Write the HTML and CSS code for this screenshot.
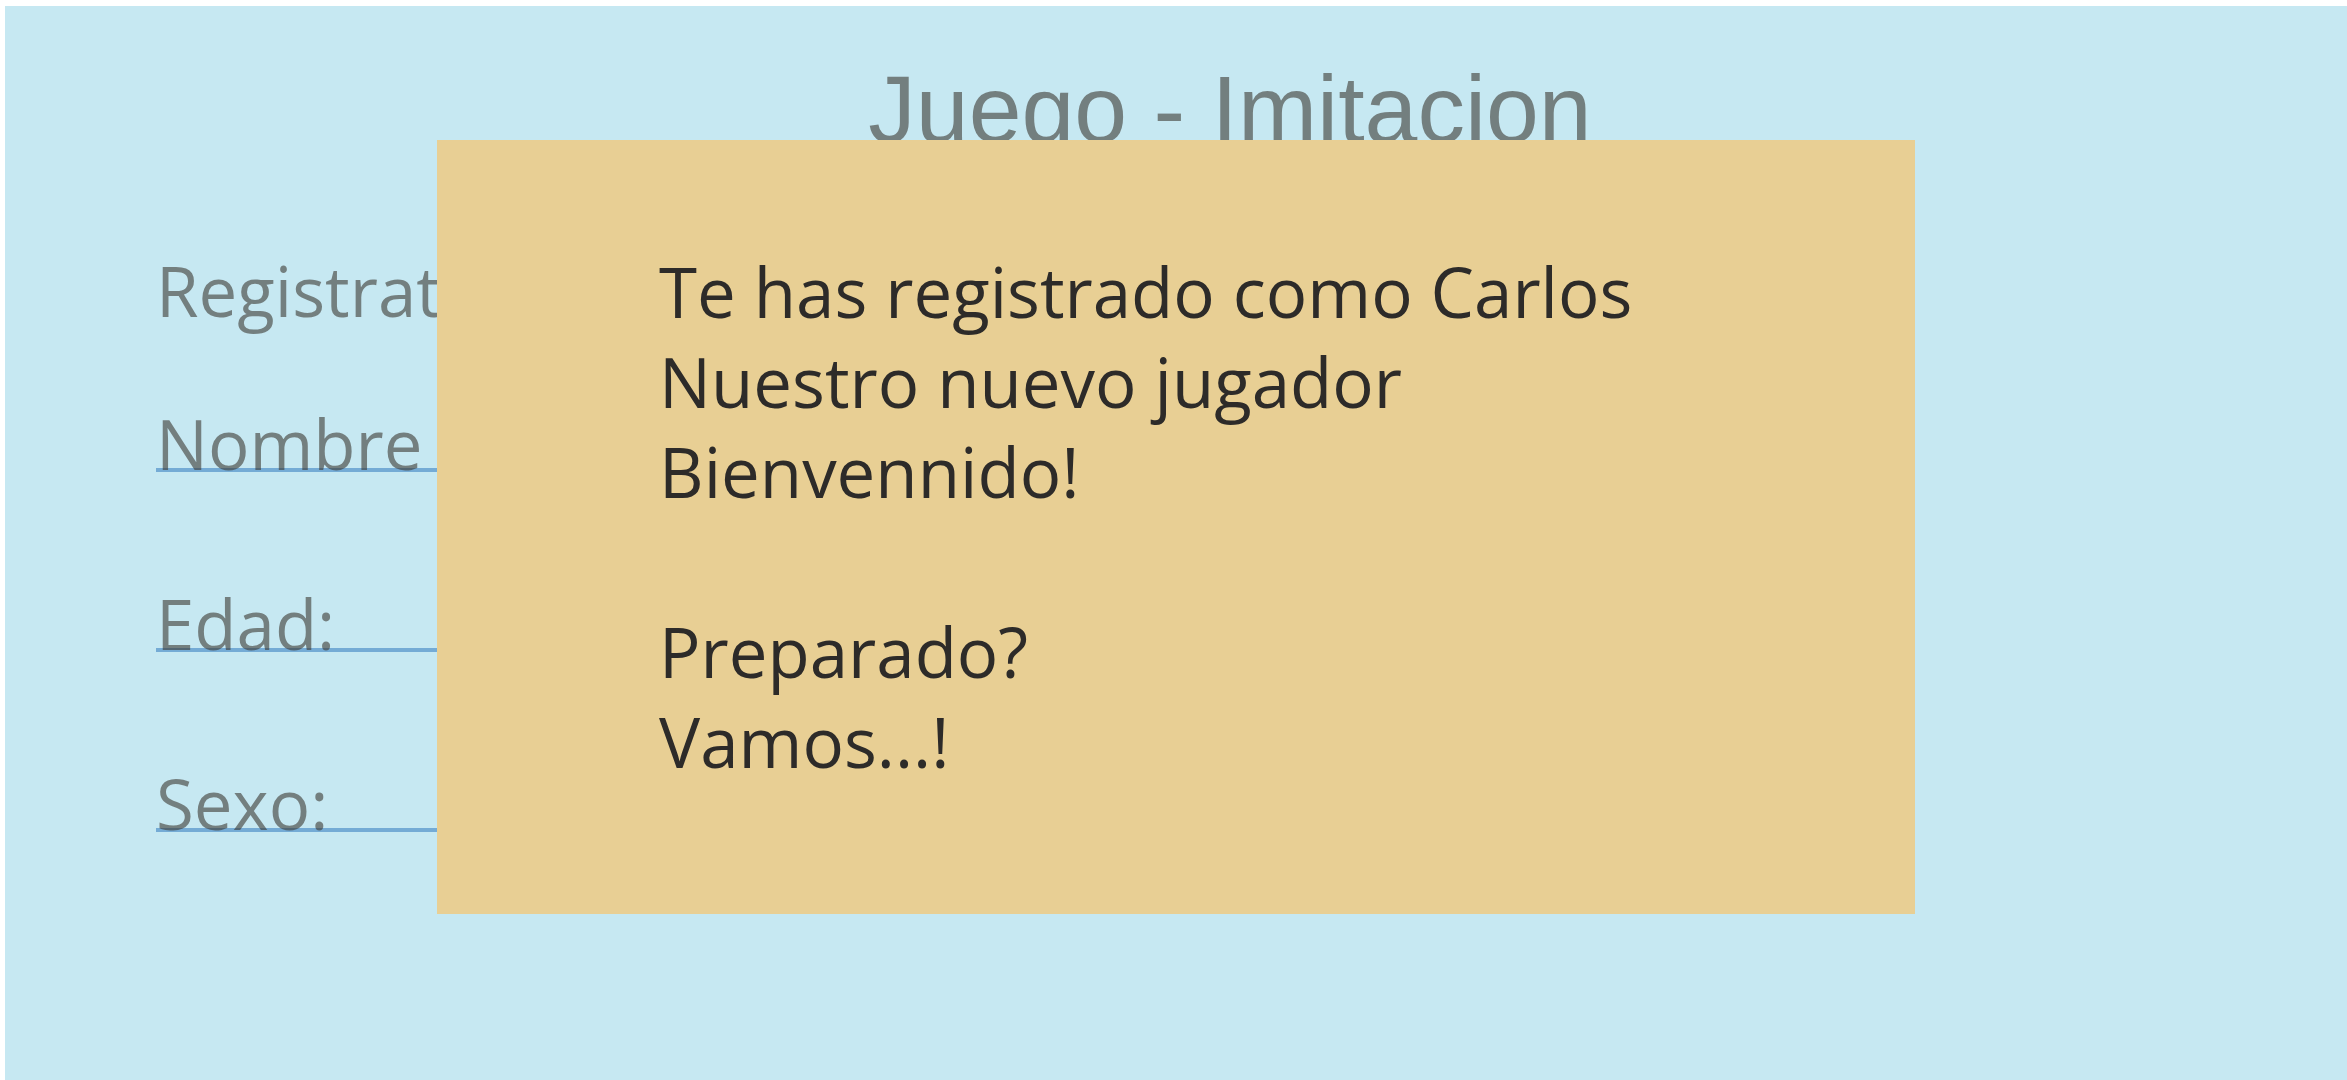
FILE: index.html
```html
<!DOCTYPE html>
<html lang="es">
<head>
<meta charset="utf-8">
<meta name="viewport" content="width=device-width, initial-scale=1">
<title>Juego - Imitacion</title>
<link rel="stylesheet" href="styles.css">
</head>
<body>
<div class="screen">
  <h1 class="title">Juego - Imitacion</h1>
  <form class="form">
    <h2 class="form-heading">Registrate</h2>
    <div class="field"><label for="nombre">Nombre</label><input id="nombre" type="text"></div>
    <div class="field"><label for="edad">Edad:</label><input id="edad" type="text"></div>
    <div class="field"><label for="sexo">Sexo:</label><input id="sexo" type="text"></div>
  </form>
  <div class="dialog" role="dialog" aria-label="Registro">
    <p>Te has registrado como Carlos<br>Nuestro nuevo jugador<br>Bienvennido!</p>
    <p>Preparado?<br>Vamos...!</p>
  </div>
</div>
</body>
</html>
```

FILE: styles.css
```css
* {
  box-sizing: border-box;
}

body {
  margin: 0;
  min-height: 100vh;
  padding: 6px 0 0 5px;
  display: flex;
  background: #fff;
  font-family: "Open Sans", "Noto Sans", sans-serif;
  font-size: 69px;
}

.screen {
  position: relative;
  flex: 1;
  background: #c6e8f2;
  color: rgba(60, 57, 50, 0.6);
}

.title {
  margin: 0;
  padding: 48px 0 0 108px;
  font: 400 95px/110px "Liberation Sans", Arial, sans-serif;
  text-align: center;
}

.form {
  display: flex;
  flex-direction: column;
  padding: 78px 151px 0;
}

.form-heading {
  margin: 0 0 80px;
  font-size: inherit;
  font-weight: 400;
  line-height: 96px;
}

.field {
  display: flex;
  width: 60%;
  margin-bottom: 126px;
  border-bottom: 4px solid #74abd5;
  line-height: 50px;
}

.field:last-child {
  margin-bottom: 0;
}

.field input {
  flex: 1;
  min-width: 0;
  height: 50px;
  padding: 0 16px;
  border: 0;
  outline: 0;
  background: transparent;
  color: inherit;
  font: inherit;
}

.dialog {
  position: absolute;
  top: 134px;
  left: 0;
  right: 0;
  width: 63.1%;
  margin: 0 auto;
  padding: 106px 64px 128px 222px;
  background: #e8cf94;
  color: #2d2b29;
  line-height: 90px;
}

.dialog p {
  margin: 0;
}

.dialog p + p {
  margin-top: 90px;
}
```
